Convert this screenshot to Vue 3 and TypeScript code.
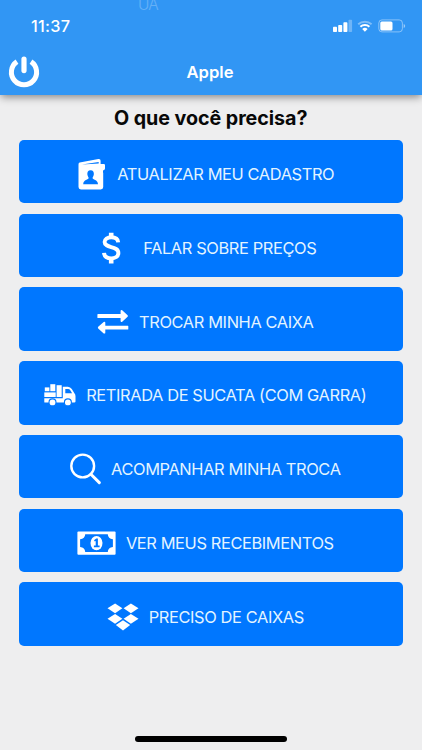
<script setup lang="ts">
interface MenuItem {
  id: string
  label: string
}

const items: MenuItem[] = [
  { id: 'contact', label: 'ATUALIZAR MEU CADASTRO' },
  { id: 'dollar', label: 'FALAR SOBRE PREÇOS' },
  { id: 'swap', label: 'TROCAR MINHA CAIXA' },
  { id: 'truck', label: 'RETIRADA DE SUCATA (COM GARRA)' },
  { id: 'search', label: 'ACOMPANHAR MINHA TROCA' },
  { id: 'money', label: 'VER MEUS RECEBIMENTOS' },
  { id: 'boxes', label: 'PRECISO DE CAIXAS' },
]
</script>

<template>
  <div class="screen">
    <header class="header">
      <span class="ghost">UA</span>
      <div class="status">
        <span class="time">11:37</span>
        <svg class="indicators" width="76" height="16" viewBox="0 0 76 16">
          <g fill="#fff">
            <rect x="1" y="8.8" width="4" height="5.2" rx="0.8" />
            <rect x="6.2" y="7" width="4" height="7" rx="0.8" />
            <rect x="11.4" y="4.3" width="4" height="9.7" rx="0.8" />
            <rect x="16.5" y="1.8" width="3.6" height="12.2" rx="0.8" opacity="0.3" />
          </g>
          <g fill="none" stroke="#fff">
            <path d="M26.2 6.3A10 10 0 0 1 39.6 6.3" stroke-width="1.9" opacity="0.38" />
            <path d="M28.4 8.8A6.7 6.7 0 0 1 37.4 8.8" stroke-width="2" />
          </g>
          <path d="M30.2 10.9A4 4 0 0 1 35.6 10.9L32.9 13.8Z" fill="#fff" />
          <rect x="46.8" y="1.9" width="23.6" height="12" rx="3.2" fill="none" stroke="#fff" stroke-width="1" opacity="0.42" />
          <rect x="48.3" y="3.6" width="12.2" height="8.8" rx="1.5" fill="#fff" />
          <path d="M71.7 6V10Q73.2 9.3 73.2 8T71.7 6Z" fill="#fff" opacity="0.5" />
        </svg>
      </div>
      <div class="navbar">
        <svg class="power" width="32" height="32" viewBox="0 0 32 32" fill="none" stroke="#fff" stroke-linecap="round">
          <path d="M9 5.7A12.6 12.6 0 1 0 23 5.7" stroke-width="5" stroke-linecap="butt" />
          <path d="M16 3V14.6" stroke-width="5.2" />
        </svg>
        <h1 class="title">Apple</h1>
      </div>
    </header>

    <main class="content">
      <h2 class="question">O que você precisa?</h2>
      <nav class="menu">
        <button v-for="item in items" :key="item.id" type="button" class="action" :class="item.id">
          <svg v-if="item.id === 'contact'" class="icon" width="31" height="34" viewBox="0 0 31 34">
            <path d="M3.7 5.5 22.4 2Q24.6 1.7 24.6 3.8V7H27.9Q29 7 29 8.2V11.5Q29 13 27 13.4V15.8H27.2V30Q27.2 32.4 24.8 32.4H5Q2.5 32.4 2.5 30V7.4Q2.5 5.8 3.7 5.5Z" fill="#fff" />
            <path d="M6 7.4 22.7 4.9V6.5L6 7.4Z" fill="#0077ff" />
            <path d="M14.6 13.2C17.1 13.2 18.2 15 17.8 17.7C17.5 19.3 16.6 20.1 16.5 21.1C16.5 22.8 21.8 22.5 22 27.2H7.2C7.4 22.5 12.7 22.8 12.7 21.1C12.6 20.1 11.7 19.3 11.4 17.7C11 15 12.1 13.2 14.6 13.2Z" fill="#0077ff" />
          </svg>
          <svg v-else-if="item.id === 'dollar'" class="icon" width="39" height="34" viewBox="2.4 0 39 34" fill="none" stroke="#fff" stroke-width="3.9">
            <path d="M26.6 11.4C26.3 8 23.6 6.3 19.7 6.3C15.8 6.3 13 8.2 13 11.1C13 17.8 26.8 14.2 26.8 22C26.8 25.4 23.6 27.4 19.7 27.4C15.5 27.4 12.7 25.3 12.4 21.8" />
            <path d="M19.6 1.7V7M19.6 27V32.6" stroke-width="4.6" />
          </svg>
          <svg v-else-if="item.id === 'swap'" class="icon" width="32" height="34" viewBox="0 0 32 34" fill="#fff">
            <path d="M.9 9.1H23.6V6.2Q23.6 4.5 25.2 5.3L30.6 10.2Q31.3 11 30.6 11.8L25.2 16.8Q23.6 17.5 23.6 15.8V13H.9Q.4 13 .4 12.4V9.7Q.4 9.1.9 9.1Z" />
            <path d="M30.8 20.7H8.3V17.8Q8.3 16.1 6.7 16.9L1.2 21.8Q.5 22.6 1.2 23.4L6.7 28.4Q8.3 29.1 8.3 27.4V24.6H30.8Q31.3 24.6 31.3 24V21.3Q31.3 20.7 30.8 20.7Z" />
          </svg>
          <svg v-else-if="item.id === 'truck'" class="icon" width="32" height="34" viewBox="0 0 32 34" fill="#fff">
            <rect x=".8" y="9.4" width="4.6" height="3.8" />
            <rect x="6.3" y="6.2" width="5" height="7" />
            <path d="M.3 14.4H11.7V19H.3Z" />
            <path d="M12.6 7.2H17.7V19H12.6Z" />
            <path fill-rule="evenodd" d="M18.8 8.8H23.9Q26.3 9 27.8 11.1L30.4 15.3Q31.5 16.3 31.5 18.2V23.6Q31.5 24.6 30.3 24.6H.8Q.3 24.6.3 23.9V20.3H18.8ZM21.3 11.1V15.3H28.1L26.3 12.3Q25.5 11.1 24.1 11.1Z" />
            <g stroke="#0077ff" stroke-width="1.1">
              <circle cx="8.5" cy="24.4" r="3.5" />
              <circle cx="23.9" cy="24.4" r="3.5" />
            </g>
          </svg>
          <svg v-else-if="item.id === 'search'" class="icon" width="31" height="34" viewBox="0 0 31 34" fill="none" stroke="#fff">
            <circle cx="12.7" cy="14" r="11.4" stroke-width="2.4" />
            <path d="M20.9 22.3 29.3 30.6" stroke-width="3" stroke-linecap="round" />
          </svg>
          <svg v-else-if="item.id === 'money'" class="icon" width="39" height="34" viewBox="0 0 39 34">
            <rect x=".4" y="5.4" width="38.2" height="23.4" rx="1" fill="#fff" />
            <path d="M8.2 8.3H30.8Q31 12.9 35.9 13.2V20.9Q31 21.2 30.8 25.9H8.2Q8 21.2 3.1 20.9V13.2Q8 12.9 8.2 8.3Z" fill="#0077ff" />
            <ellipse cx="19.5" cy="17.1" rx="6" ry="7.2" fill="#fff" />
            <path d="M17 14.3 19.2 12.5H20.9V19.6H22.6V21.2H16.9V19.6H18.7V14.9L17.8 15.5Z" fill="#0077ff" />
          </svg>
          <svg v-else class="icon" width="32" height="34" viewBox="0 0 32 34" fill="#fff">
            <path d="M8.1 3.4 15.4 8.3 8.1 13.2.5 8.3Z" />
            <path d="M23.9 3.4 31.5 8.3 23.9 13.2 16.6 8.3Z" />
            <path d="M8.1 14 15.4 18.8 8.1 23.8.5 18.8Z" />
            <path d="M23.9 14 31.5 18.8 23.9 23.8 16.6 18.8Z" />
            <path d="M16 20.2 23.2 25.1 16 30.4 8.8 25.1Z" />
          </svg>
          <span class="label">{{ item.label }}</span>
        </button>
      </nav>
    </main>

    <div class="home-indicator"></div>
  </div>
</template>

<style>
body {
  margin: 0;
  background: #eeeeef;
}
</style>

<style scoped>
.screen {
  display: flex;
  flex-direction: column;
  box-sizing: border-box;
  height: 750px;
  overflow: hidden;
  background: #eeeeef;
  color: #fff;
  font-family: Inter, "Liberation Sans", sans-serif;
}

.header {
  position: relative;
  flex: none;
  height: 94.5px;
  background: #3196f4;
  box-shadow: 0 3px 8px -1px rgba(0, 0, 0, 0.45);
}

.ghost {
  position: absolute;
  left: 138px;
  top: -5px;
  font-size: 15.5px;
  font-weight: 300;
  line-height: 20px;
  letter-spacing: -0.8px;
  opacity: 0.25;
}

.status {
  display: flex;
  align-items: center;
  justify-content: space-between;
  height: 52px;
  padding: 0 14px 0 31px;
}

.time {
  font-size: 16.3px;
  font-weight: 500;
  letter-spacing: 0.25px;
}

.navbar {
  display: grid;
  grid-template-columns: 32px 1fr 32px;
  align-items: center;
  height: 40px;
  padding: 0 10px 0 8px;
}

.power {
  display: block;
}

.title {
  margin: 0;
  font-size: 16.6px;
  font-weight: 600;
  line-height: 24px;
  text-align: center;
}

.content {
  flex: 1;
  padding: 10px 19.3px 0 18.7px;
}

.question {
  margin: 0;
  height: 35.3px;
  color: #080808;
  font-size: 19.7px;
  font-weight: 700;
  line-height: 27px;
  letter-spacing: -0.05px;
  text-align: center;
}

.menu {
  display: grid;
  grid-auto-rows: 63.4px;
  row-gap: 10.4px;
}

.action {
  display: flex;
  align-items: center;
  justify-content: center;
  gap: 10.2px;
  margin: 0;
  padding: 5px 11px 0 0;
  border: 0;
  border-radius: 5px;
  background: #0077ff;
  color: #e3f4ff;
  font: inherit;
}

.icon {
  flex: none;
}

.label {
  font-size: 16.4px;
  line-height: 20px;
  letter-spacing: -0.38px;
  white-space: nowrap;
}

.home-indicator {
  flex: none;
  width: 152px;
  height: 5.6px;
  margin: 0 auto 8px;
  border-radius: 3px;
  background: #000;
}
</style>
